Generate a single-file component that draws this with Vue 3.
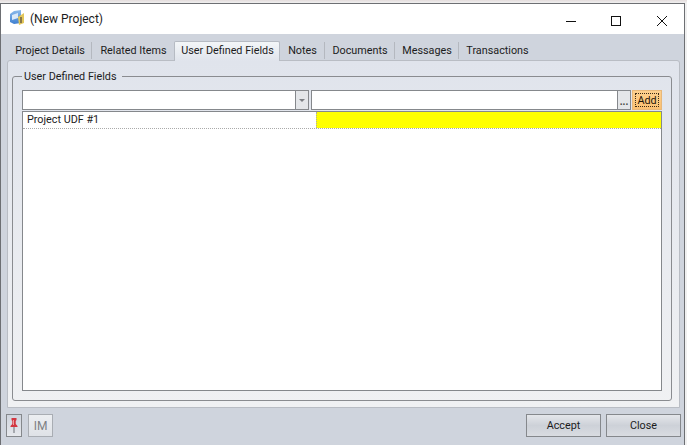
<script setup>
const tabs = ['Project Details', 'Related Items', 'User Defined Fields', 'Notes', 'Documents', 'Messages', 'Transactions']
const active = 'User Defined Fields'
</script>

<template>
  <div class="screen">
    <div class="window">
      <header class="titlebar">
        <svg class="appicon" width="17" height="17" viewBox="0 0 17 17">
          <defs>
            <linearGradient id="ab" x1="0" y1="0" x2="0" y2="1">
              <stop offset="0" stop-color="#8dbcec" />
              <stop offset="1" stop-color="#3f7fd0" />
            </linearGradient>
          </defs>
          <path d="M1 5 L5 2 L12 1 L12 14 L5 15 L1 13 Z" fill="url(#ab)" />
          <path d="M3 6 L9 4 L9 9 L3 11 Z" fill="#dbe9f8" />
          <path d="M9 8 L15 4 L15 14 L10 16 Z" fill="#e2c65a" />
          <rect x="11" y="8" width="2" height="6" fill="#86764a" />
        </svg>
        <span class="title">(New Project)</span>
        <div class="winbtns">
          <svg width="46" height="30" viewBox="0 0 46 30"><path d="M19 18.5 H29" stroke="#111" fill="none" /></svg>
          <svg width="46" height="30" viewBox="0 0 46 30"><rect x="18.5" y="13.5" width="9" height="9" stroke="#111" fill="none" /></svg>
          <svg width="46" height="30" viewBox="0 0 46 30"><path d="M18 13 L28 23 M28 13 L18 23" stroke="#111" fill="none" /></svg>
        </div>
      </header>

      <div class="body">
        <nav class="tabs">
          <div v-for="t in tabs" :key="t" class="tab" :class="{ active: t === active }">{{ t }}</div>
        </nav>

        <section class="panel">
          <fieldset class="group">
            <legend>User Defined Fields</legend>
            <div class="inputs">
              <div class="combo">
                <div class="field"></div>
                <div class="arrow"><span class="tri"></span></div>
              </div>
              <div class="textbox">
                <div class="field"></div>
                <div class="dots">...</div>
              </div>
              <div class="add"><span>Add</span></div>
            </div>
            <div class="grid">
              <div class="row">
                <div class="cell name">Project UDF #1</div>
                <div class="cell value"></div>
              </div>
            </div>
          </fieldset>
        </section>

        <footer class="footer">
          <div class="left">
            <div class="pin">
              <svg width="14" height="21" viewBox="0 0 14 21">
                <path d="M4.5 3 H9.5 V5 L8.7 6 V9 L10.5 11 V12 H3.5 V11 L5.3 9 V6 L4.5 5 Z" fill="#d23640" />
                <rect x="6" y="5" width="1" height="5" fill="#ee9c9c" />
                <rect x="6.3" y="12" width="1.4" height="6" fill="#8d9096" />
              </svg>
            </div>
            <div class="im">IM</div>
          </div>
          <div class="right">
            <div class="btn">Accept</div>
            <div class="btn">Close</div>
          </div>
        </footer>
      </div>
    </div>
  </div>
</template>

<style>
html, body { margin: 0; padding: 0; overflow: hidden; background: #e8e8e8; }
</style>

<style scoped>
.screen {
  width: 687px;
  height: 445px;
  box-sizing: border-box;
  padding-top: 3px;
  background: linear-gradient(#e4dcdc, #f0f0f0 3px);
  font-family: Roboto, "Liberation Sans", Arial, sans-serif;
  font-size: 10.8px;
  color: #1c1c1c;
}
.window {
  width: 685px;
  height: 442px;
  box-sizing: border-box;
  border: 1px solid #6d6f73;
  border-bottom: 0;
  display: flex;
  flex-direction: column;
}
.titlebar {
  height: 30px;
  flex: none;
  background: #fff;
  display: flex;
  align-items: center;
  padding-left: 8px;
}
.appicon { flex: none; margin-bottom: 3px; }
.title { margin-left: 4px; font-size: 12px; margin-bottom: 1px; }
.winbtns { margin-left: auto; display: flex; margin-top: -3px; margin-right: -1px; }
.winbtns svg { display: block; }
.body {
  flex: 1;
  min-height: 0;
  background: #cfd4dd;
  display: flex;
  flex-direction: column;
  padding: 7px 4px 0 6px;
}
.tabs {
  display: flex;
  height: 19px;
  flex: none;
  padding-left: 1px;
  position: relative;
  z-index: 1;
}
.tab {
  box-sizing: border-box;
  padding: 2px 0 0 1px;
  height: 17px;
  margin-top: 1px;
  white-space: nowrap;
  text-align: center;
  border-right: 1px solid #b4b8bf;
  line-height: 13px;
}
.tab:nth-child(1) { width: 84px; }
.tab:nth-child(2) { width: 82px; border-right: 0; }
.tab:nth-child(3) { width: 106px; }
.tab:nth-child(4) { width: 45px; }
.tab:nth-child(5) { width: 70px; }
.tab:nth-child(6) { width: 64px; }
.tab:nth-child(7) { width: 76px; border-right: 0; }
.tab.active {
  background: linear-gradient(#f3f6f8, #e0e4ec);
  border: 1px solid #b6bbc3;
  border-bottom: 0;
  border-radius: 2px 2px 0 0;
  padding-top: 2px;
  height: 20px;
  margin-top: 0;
  line-height: 14px;
}
.panel {
  height: 348px;
  flex: none;
  box-sizing: border-box;
  background: linear-gradient(#e0e4ec, #f0f1f3);
  border: 1px solid #b9bdc4;
  border-radius: 3px 3px 0 0;
  padding: 9px 7px 6px 4px;
}
.group {
  margin: 0;
  height: 100%;
  box-sizing: border-box;
  border: 1px solid #8a8c90;
  border-radius: 3px;
  padding: 7px 9px 10px 9px;
  min-width: 0;
}
legend {
  padding: 0 5px 0 2px;
  margin-left: 0;
  line-height: 13px;
}
.inputs {
  display: flex;
  height: 20px;
}
.combo, .textbox {
  display: flex;
  box-sizing: border-box;
  border: 1px solid #85888c;
  background: #fff;
}
.combo { width: 287px; margin-right: 2px; }
.textbox { width: 320px; margin-right: 1px; }
.field { flex: 1; }
.arrow {
  width: 12px;
  border-left: 1px solid #85888c;
  background: #e4e6e9;
  display: flex;
  align-items: center;
  justify-content: center;
}
.tri {
  width: 0;
  height: 0;
  border-left: 3px solid transparent;
  border-right: 3px solid transparent;
  border-top: 3px solid #7c7f84;
}
.dots {
  width: 12px;
  border-left: 1px solid #85888c;
  background: #e4e6e9;
  text-align: center;
  line-height: 21px;
  color: #444;
  font-weight: bold;
  font-size: 10px;
}
.add {
  width: 30px;
  box-sizing: border-box;
  border: 1px solid #e8b87a;
  background: linear-gradient(#fdd08f, #fbc071);
  padding: 2px;
  display: flex;
}
.add span {
  flex: 1;
  border: 1px dotted #3a2a14;
  text-align: center;
  line-height: 13px;
  color: #1c1408;
}
.grid {
  margin-top: 1px;
  height: 280px;
  box-sizing: border-box;
  border: 1px solid #85888c;
  background: #fff;
}
.row {
  display: flex;
  height: 16px;
  border-bottom: 1px dotted #aaa;
}
.cell { line-height: 16px; box-sizing: border-box; }
.name { width: 293px; padding-left: 4px; }
.value {
  flex: 1;
  background: #ffff00;
  border-left: 1px dotted #aaa;
}
.footer {
  flex: 1;
  display: flex;
  justify-content: space-between;
  padding-top: 6px;
  margin: 0 -1px;
}
.left { display: flex; gap: 6px; }
.pin {
  width: 14px;
  height: 21px;
  border: 1px solid #85888c;
  background: linear-gradient(#cfd4dd, #e6e8ec);
}
.pin svg { display: block; }
.im {
  width: 23px;
  height: 21px;
  border: 1px solid #a9adb3;
  background: linear-gradient(#eceef1, #dfe2e7);
  color: #7d8084;
  text-align: center;
  line-height: 22px;
  font-size: 12px;
}
.right { display: flex; gap: 5px; }
.btn {
  width: 73px;
  height: 21px;
  border: 1px solid #85888c;
  background: linear-gradient(#e4e6ea, #cdd1d8 50%, #d9dce1);
  text-align: center;
  line-height: 22px;
}
</style>
